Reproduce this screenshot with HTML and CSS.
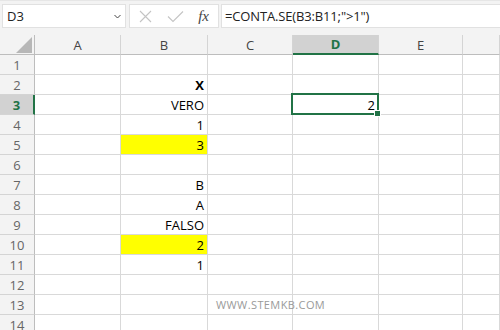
FILE: index.html
```html
<!DOCTYPE html>
<html lang="it">
<head>
    <meta charset="UTF-8">
    <title>CONTA.SE</title>
    <link rel="stylesheet" href="styles.css">
</head>
<body>
    <div class="toolbar">
        <div class="namebox">
            <span>D3</span>
            <svg width="7" height="5" viewBox="0 0 7 5"><polyline points="0.5,1 3.5,4 6.5,1" fill="none" stroke="#444" stroke-width="1"/></svg>
        </div>
        <div class="fxbox">
            <svg width="13" height="13" viewBox="0 0 13 13"><path d="M1 1 L12 12 M12 1 L1 12" stroke="#c4c4c4" stroke-width="1.1"/></svg>
            <svg width="17" height="13" viewBox="0 0 17 13"><polyline points="1,6.5 6,11.5 16,1.5" fill="none" stroke="#c4c4c4" stroke-width="1.1"/></svg>
            <span class="fx">fx</span>
        </div>
        <div class="formula">=CONTA.SE(B3:B11;"&gt;1")</div>
    </div>
    <div class="spacer"></div>

    <div class="sheet">
        <div class="hdr corner"><svg width="16" height="16" viewBox="0 0 16 16"><polygon points="16,0 16,16 0,16" fill="#b7b7b7"/></svg></div>
        <div class="hdr col">A</div>
        <div class="hdr col">B</div>
        <div class="hdr col">C</div>
        <div class="hdr col active">D</div>
        <div class="hdr col">E</div>
        <div class="hdr col"></div>
    </div>
    <div id="rows" class="sheet"></div>

    <div class="watermark">WWW.STEMKB.COM</div>

    <script>
        const colB = { 2: 'X', 3: 'VERO', 4: '1', 5: '3', 7: 'B', 8: 'A', 9: 'FALSO', 10: '2', 11: '1' };
        const yellow = [5, 10];
        const rows = document.getElementById('rows');
        for (let r = 1; r <= 14; r++) {
            let html = `<div class="hdr row${r === 3 ? ' active' : ''}">${r}</div>`;
            for (let c = 0; c < 6; c++) {
                let cls = 'cell';
                let text = '';
                if (c === 1 && colB[r]) text = colB[r];
                if (c === 1 && yellow.includes(r)) cls += ' yellow';
                if (c === 1 && r === 2) cls += ' bold';
                if (c === 3 && r === 3) { cls += ' selected'; text = '2'; }
                html += `<div class="${cls}">${text}</div>`;
            }
            rows.innerHTML += html;
        }
    </script>
</body>
</html>
```

FILE: styles.css
```css
body {
    margin: 0;
    background: #fff;
    font-family: 'Open Sans', 'Noto Sans', sans-serif;
    color: #000;
    overflow: hidden;
    position: relative;
    width: 500px;
    height: 330px;
}
.toolbar {
    display: flex;
    gap: 2px;
    height: 27px;
    box-sizing: border-box;
    padding: 3px 0 0 2px;
    background: #f3f3f3;
    border-top: 1px solid #e6e6e6;
}
.namebox, .fxbox, .formula {
    background: #fff;
    border: 1px solid #e1e1e1;
    box-sizing: border-box;
    height: 24px;
    display: flex;
    align-items: center;
    font-size: 13px;
    color: #222;
}
.namebox {
    width: 124px;
    justify-content: space-between;
    padding: 0 4px 0 4px;
}
.fxbox {
    width: 90px;
    margin-left: 1px;
    padding: 0 9px 0 9px;
    justify-content: space-between;
}
.fx {
    font-family: 'Liberation Serif', serif;
    font-style: italic;
    font-size: 15px;
    color: #444;
}
.formula {
    flex: 1;
    padding-left: 3px;
    border-right: none;
    letter-spacing: -0.15px;
}
.spacer {
    height: 8px;
    background: #f3f3f3;
}
.sheet {
    display: grid;
    grid-template-columns: 35px 86px 87px 85px 86px 84px 1fr;
    grid-auto-rows: 20px;
}
.sheet:first-of-type {
    grid-auto-rows: 19px;
}
.hdr {
    background: #f3f3f3;
    box-sizing: border-box;
    display: flex;
    align-items: center;
    justify-content: center;
    font-size: 13px;
    color: #555;
}
.hdr.col {
    border-right: 1px solid #d4d4d4;
    border-bottom: 1px solid #bdbdbd;
    color: #444;
}
.hdr.corner {
    border-right: 1px solid #bdbdbd;
    border-bottom: 1px solid #bdbdbd;
    justify-content: flex-end;
    align-items: flex-end;
    padding: 0 2px 1px 0;
}
.hdr.row {
    border-right: 1px solid #bdbdbd;
    border-bottom: 1px solid #d4d4d4;
    color: #666;
    padding-top: 1px;
}
.hdr.col.active {
    background: #d2d2d2;
    border-bottom: 2px solid #217346;
    color: #217346;
    font-weight: bold;
}
.hdr.row.active {
    background: #d2d2d2;
    border-right: 2px solid #217346;
    color: #217346;
    font-weight: bold;
}
.cell {
    box-sizing: border-box;
    border-right: 1px solid #d9d9d9;
    border-bottom: 1px solid #d9d9d9;
    display: flex;
    align-items: flex-end;
    justify-content: flex-end;
    padding: 0 3px 0 0;
    font-size: 13px;
    line-height: 18px;
    position: relative;
}
.yellow {
    background: #ffff00;
}
.bold {
    font-weight: bold;
}
.selected::after {
    content: '';
    position: absolute;
    top: -2px;
    left: -2px;
    right: -1px;
    bottom: -1px;
    border: 2px solid #217346;
}
.selected::before {
    content: '';
    position: absolute;
    right: -3px;
    bottom: -3px;
    width: 5px;
    height: 5px;
    background: #217346;
    border: 1px solid #fff;
    z-index: 1;
}
.watermark {
    position: absolute;
    left: 216px;
    top: 297px;
    font-size: 11px;
    letter-spacing: 0.4px;
    color: #9a9a9a;
}
```
